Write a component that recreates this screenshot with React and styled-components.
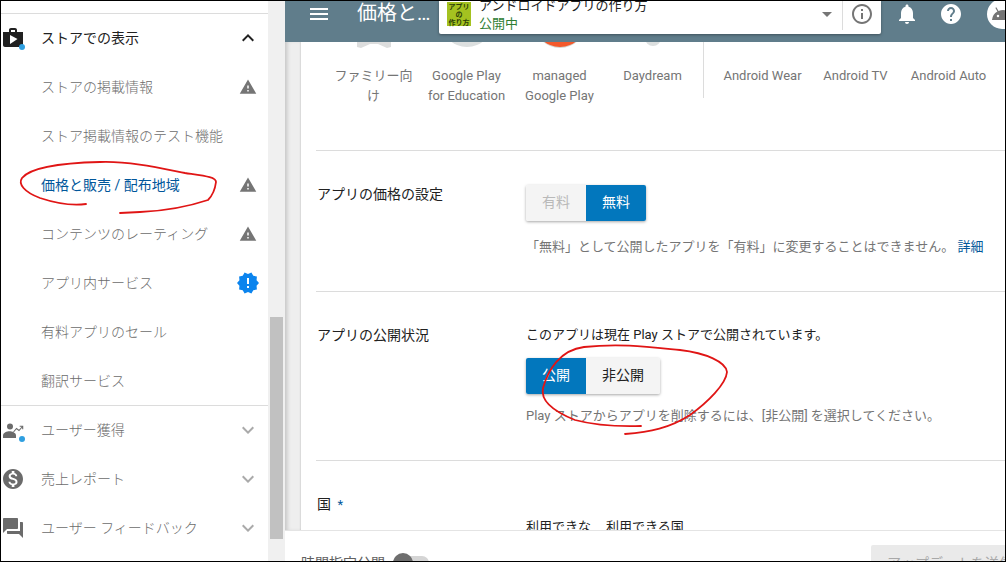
import React from 'react';
import styled, { createGlobalStyle, css } from 'styled-components';
import {
  MdMenu, MdArrowDropDown, MdInfoOutline, MdNotifications, MdHelp, MdAndroid, MdShop,
  MdWarning, MdNewReleases, MdExpandLess, MdExpandMore, MdMonetizationOn, MdQuestionAnswer,
} from 'react-icons/md';

const GlobalStyle = createGlobalStyle`
  * { box-sizing: border-box; }
  body {
    margin: 0;
    font-family: Roboto, "Noto Sans CJK JP", sans-serif;
    font-size: 13px;
    line-height: 18px;
    color: #212121;
    background: #fff;
  }
  button { font: inherit; border: 0; padding: 0; background: none; color: inherit; cursor: pointer; }
  a { color: #01579b; text-decoration: none; }
  svg { display: block; flex: none; }
`;

const Frame = styled.div`
  position: relative;
  display: flex;
  height: 100vh;
  border: 1px solid #000;
  overflow: hidden;
`;

/* ---------- sidebar ---------- */
const Sidebar = styled.aside`
  display: flex;
  flex: none;
  width: 284px;
`;
const Nav = styled.nav`
  flex: 1;
  padding-top: 12px;
  background: #fff;
`;
const NavSection = styled.section`
  box-shadow: inset 0 1px 0 #dcdcdc;
`;
const NavLink = styled.a`
  display: flex;
  align-items: center;
  justify-content: space-between;
  height: 49px;
  padding: 0 12px 0 40px;
  font-size: 14px;
  font-weight: 300;
  color: #6c6c6c;
  ${(p) => p.$active && css`color: #01579b; font-weight: 400;`}
`;
const NavHeading = styled.button`
  display: flex;
  align-items: center;
  width: 100%;
  height: 49px;
  padding-right: 8px;
  font-size: 14px;
  font-weight: ${(p) => (p.$open ? 400 : 300)};
  text-align: left;
  color: ${(p) => (p.$open ? '#212121' : '#6c6c6c')};
  span { flex: 1; }
  > svg { color: ${(p) => (p.$open ? '#212121' : '#aaa')}; }
`;
const HeadingIcon = styled.i`
  position: relative;
  width: 24px;
  margin-right: 16px;
  color: ${(p) => (p.$open ? '#212121' : '#6b6b6b')};
`;
const Dot = styled.b`
  position: absolute;
  right: 0;
  bottom: 0;
  width: 6px;
  height: 6px;
  border-radius: 50%;
  background: #2f9fe0;
`;
const StatusSlot = styled.b`
  display: flex;
  justify-content: center;
  width: 24px;
  margin-right: -4px;
  color: ${(p) => (p.$tone === 'new' ? '#0b84ee' : '#757575')};
`;
const ScrollTrack = styled.div`
  flex: none;
  display: flex;
  flex-direction: column;
  width: 17px;
  padding: 0 2px 22px;
  background: #f0f0f0;
`;
const ScrollThumb = styled.div`
  height: 222px;
  margin-top: auto;
  background: #c1c1c1;
`;

/* ---------- header ---------- */
const Main = styled.div`
  flex: 1;
  min-width: 0;
  display: flex;
  flex-direction: column;
`;
const Header = styled.header`
  flex: none;
  display: flex;
  align-items: flex-start;
  height: 41px;
  padding-left: 22px;
  background: #607d8b;
  color: #fff;
  overflow: hidden;
`;
const IconButton = styled.button`
  flex: none;
  display: flex;
  align-items: center;
  justify-content: center;
  width: ${(p) => p.$width || 24}px;
  height: 26px;
`;
const Title = styled.h1`
  flex: none;
  width: 82px;
  margin: 0 0 0 26px;
  font-size: 20px;
  font-weight: 400;
  line-height: 24px;
  white-space: nowrap;
`;
const AppPicker = styled.div`
  flex: 1;
  display: flex;
  height: 33px;
  background: #fff;
  color: #757575;
  border-radius: 0 0 2px 2px;
  box-shadow: 0 1px 3px rgba(0, 0, 0, 0.35);
`;
const AppIcon = styled.div`
  flex: none;
  width: 24px;
  height: 24px;
  margin: 1px 8px 0;
  padding-top: 1px;
  background: #a4c220;
  color: #2c3f08;
  font-size: 7px;
  font-weight: 700;
  line-height: 8px;
  text-align: center;
  white-space: nowrap;
`;
const AppText = styled.div`
  flex: 1;
  min-width: 0;
  margin-top: -4px;
  white-space: nowrap;
  strong { display: block; font-weight: 400; color: #212121; }
  span { display: block; color: #2e7d32; }
`;
const InfoDivider = styled.div`
  width: 1px;
  height: 29px;
  margin-left: 3px;
  background: #dcdcdc;
`;
const HeaderActions = styled.div`
  flex: none;
  display: flex;
  gap: 20px;
  padding-left: 14px;
`;
const Avatar = styled.button`
  flex: none;
  display: flex;
  align-items: center;
  justify-content: flex-start;
  width: 18px;
  height: 30px;
  margin-top: -2px;
  margin-left: 4px;
  padding-left: 4px;
  border-radius: 15px 0 0 15px;
  background: #fff;
  color: #757575;
  overflow: hidden;
`;

/* ---------- page ---------- */
const Content = styled.main`
  flex: 1;
  min-height: 0;
  padding-left: 16px;
  background: #eee;
  box-shadow: inset 4px 0 4px -2px rgba(0, 0, 0, 0.18);
  overflow: hidden;
`;
const Card = styled.div`
  padding-left: 15px;
  background: #fff;
  box-shadow: 0 0 2px rgba(0, 0, 0, 0.25);
`;
const Programs = styled.ul`
  display: flex;
  height: 108px;
  margin: 0;
  padding: 0 9px 0 11px;
  list-style: none;
`;
const Program = styled.li`
  flex: 0 0 93px;
  padding: 0 4px;
  line-height: 20px;
  text-align: center;
  color: #757575;
  svg { margin: 0 auto; }
`;
const ProgramDivider = styled.li`
  flex: none;
  width: 1px;
  height: 56px;
  margin: 0 12px 0 4px;
  background: #dcdcdc;
`;
const Section = styled.section`
  display: flex;
  padding: 34px 0 35px;
  border-top: 1px solid #dcdcdc;
`;
const Label = styled.h2`
  flex: none;
  width: 210px;
  margin: 0;
  padding-left: 1px;
  font-size: 14px;
  font-weight: 400;
  line-height: 18px;
  em { margin-left: 3px; font-style: normal; font-size: 13px; color: #01579b; }
`;
const Field = styled.div`
  flex: 1;
  min-width: 0;
`;
const Lead = styled.p`
  margin: 0 0 14px;
`;
const Segments = styled.div`
  display: inline-flex;
  vertical-align: top;
  height: 36px;
  border-radius: 2px;
  box-shadow: 0 1px 3px rgba(0, 0, 0, 0.35);
  overflow: hidden;
`;
const Segment = styled.button`
  padding: 0 16px 2px;
  font-size: 14px;
  background: ${(p) => (p.$on ? '#0277bd' : '#f4f4f4')};
  color: ${(p) => (p.$on ? '#fff' : '#212121')};
  &:disabled { color: #b9b9b9; cursor: default; }
`;
const Help = styled.p`
  margin: ${(p) => (p.$loose ? 17 : 13)}px 0 0;
  color: #757575;
  white-space: nowrap;
`;
const CountryTabs = styled.div`
  display: flex;
  gap: 15px;
  padding-top: 23px;
`;

/* ---------- footer ---------- */
const Footer = styled.footer`
  flex: none;
  display: flex;
  align-items: flex-start;
  height: 31px;
  padding-left: 16px;
  border-top: 1px solid #e4e4e4;
  background: #fff;
  overflow: hidden;
`;
const SwitchLabel = styled.label`
  display: flex;
  align-items: center;
  gap: 8px;
  height: 36px;
  margin-top: 14px;
  font-size: 14px;
  color: #616161;
`;
const Switch = styled.input`
  appearance: none;
  display: flex;
  align-items: center;
  width: 36px;
  height: 14px;
  margin: 0;
  border-radius: 7px;
  background: #d5d5d5;
  &::before {
    content: '';
    width: 20px;
    height: 20px;
    border-radius: 50%;
    background: #6e6e6e;
  }
`;
const SubmitButton = styled.button`
  width: 134px;
  height: 36px;
  margin: 14px 0 0 auto;
  padding-left: 16px;
  border-radius: 2px 0 0 2px;
  background: #eaeaea;
  font-size: 14px;
  text-align: left;
  white-space: nowrap;
  overflow: hidden;
  &:disabled { color: #a8a8a8; }
`;

const Annotations = styled.svg`
  position: absolute;
  left: -1px;
  top: -1px;
  pointer-events: none;
`;

const storeLinks = [
  { text: 'ストアの掲載情報', status: 'warn' },
  { text: 'ストア掲載情報のテスト機能' },
  { text: '価格と販売 / 配布地域', status: 'warn', active: true },
  { text: 'コンテンツのレーティング', status: 'warn' },
  { text: 'アプリ内サービス', status: 'new' },
  { text: '有料アプリのセール' },
  { text: '翻訳サービス' },
];

const UsersTrend = () => (
  <svg width="24" height="24" viewBox="0 0 24 24" fill="currentColor">
    <circle cx="9" cy="8.500" r="3" />
    <path d="M2 20v-2.500c0-2.800 4-4.200 6.500-4.200s6.500 1.400 6.500 4.200V20z" />
    <path d="M12.500 14l3-3.500 2.500 2 3.500-4M18.700 8.200h3v3" fill="none" stroke="currentColor" strokeWidth="1.100" />
  </svg>
);

const groups = [
  { text: 'ユーザー獲得', icon: <UsersTrend />, dot: true },
  { text: '売上レポート', icon: <MdMonetizationOn size={24} /> },
  { text: 'ユーザー フィードバック', icon: <MdQuestionAnswer size={24} /> },
];

const ProgramArt = ({ children }) => (
  <svg width="44" height="24" viewBox="0 0 44 24">{children}</svg>
);

const programs = [
  { text: 'ファミリー向け', art: <path d="M5 0h34v5l-4 1-9-4h-8l-9 4-4-1z" fill="#dcdddd" /> },
  { text: 'Google Play for Education', art: <circle cx="22" cy="-21" r="26" fill="#dcdfdf" /> },
  {
    text: 'managed Google Play',
    art: (
      <>
        <circle cx="22" cy="-20" r="26" fill="#d5d5d0" />
        <circle cx="22" cy="-21" r="26" fill="#f4592b" />
      </>
    ),
  },
  { text: 'Daydream', art: <circle cx="22" cy="-4" r="8" fill="#dcdfdf" /> },
];
const devices = ['Android Wear', 'Android TV', 'Android Auto'];

export default function App() {
  return (
    <Frame>
      <GlobalStyle />
      <Sidebar>
        <Nav>
          <NavSection>
            <NavHeading $open>
              <HeadingIcon $open><MdShop size={24} /><Dot /></HeadingIcon>
              <span>ストアでの表示</span>
              <MdExpandLess size={24} />
            </NavHeading>
            {storeLinks.map((l) => (
              <NavLink key={l.text} href="#" $active={l.active}>
                {l.text}
                {l.status && (
                  <StatusSlot $tone={l.status}>
                    {l.status === 'new' ? <MdNewReleases size={24} /> : <MdWarning size={18} />}
                  </StatusSlot>
                )}
              </NavLink>
            ))}
          </NavSection>
          <NavSection>
            {groups.map((g) => (
              <NavHeading key={g.text}>
                <HeadingIcon>{g.icon}{g.dot && <Dot />}</HeadingIcon>
                <span>{g.text}</span>
                <MdExpandMore size={24} />
              </NavHeading>
            ))}
          </NavSection>
        </Nav>
        <ScrollTrack><ScrollThumb /></ScrollTrack>
      </Sidebar>

      <Main>
        <Header>
          <IconButton aria-label="メニュー"><MdMenu size={24} /></IconButton>
          <Title>価格と…</Title>
          <AppPicker>
            <AppIcon>アプリ<br />の<br />作り方</AppIcon>
            <AppText>
              <strong>アンドロイドアプリの作り方</strong>
              <span>公開中</span>
            </AppText>
            <IconButton aria-label="アプリを選択"><MdArrowDropDown size={24} /></IconButton>
            <InfoDivider />
            <IconButton $width={38} aria-label="情報"><MdInfoOutline size={24} /></IconButton>
          </AppPicker>
          <HeaderActions>
            <IconButton aria-label="通知"><MdNotifications size={24} /></IconButton>
            <IconButton aria-label="ヘルプ"><MdHelp size={24} /></IconButton>
            <Avatar aria-label="アカウント"><MdAndroid size={24} /></Avatar>
          </HeaderActions>
        </Header>

        <Content>
          <Card>
            <Programs>
              {programs.map((p) => (
                <Program key={p.text}><ProgramArt>{p.art}</ProgramArt>{p.text}</Program>
              ))}
              <ProgramDivider />
              {devices.map((d) => (
                <Program key={d}><ProgramArt />{d}</Program>
              ))}
            </Programs>

            <Section>
              <Label>アプリの価格の設定</Label>
              <Field>
                <Segments>
                  <Segment disabled>有料</Segment>
                  <Segment $on>無料</Segment>
                </Segments>
                <Help $loose>
                  「無料」として公開したアプリを「有料」に変更することはできません。 <a href="#">詳細</a>
                </Help>
              </Field>
            </Section>

            <Section>
              <Label>アプリの公開状況</Label>
              <Field>
                <Lead>このアプリは現在 Play ストアで公開されています。</Lead>
                <Segments>
                  <Segment $on>公開</Segment>
                  <Segment>非公開</Segment>
                </Segments>
                <Help>Play ストアからアプリを削除するには、[非公開] を選択してください。</Help>
              </Field>
            </Section>

            <Section>
              <Label>国 <em>*</em></Label>
              <Field>
                <CountryTabs><span>利用できな</span><span>利用できる国</span></CountryTabs>
              </Field>
            </Section>
          </Card>
        </Content>

        <Footer>
          <SwitchLabel>時間指定公開<Switch type="checkbox" /></SwitchLabel>
          <SubmitButton disabled>アップデートを送信</SubmitButton>
        </Footer>
      </Main>

      <Annotations width="1006" height="562" viewBox="0 0 1006 562" fill="none" stroke="#e01515" strokeWidth="1.800" strokeLinecap="round">
        <path d="M86 204C70 206 52 202 40 198C24 192 18 184 22 178C30 168 60 163 100 162C130 161 160 168 185 173C205 176 216 177 216 182C215 190 212 196 208 200C190 206 165 211 140 212L120 213" />
        <path d="M641 426C610 427 590 424 575 420C555 412 540 402 543 388C548 370 560 350 584 347C620 343 650 347 680 350C706 353 726 362 727 372C726 384 708 402 690 415C670 428 650 432 625 434" />
      </Annotations>
    </Frame>
  );
}
